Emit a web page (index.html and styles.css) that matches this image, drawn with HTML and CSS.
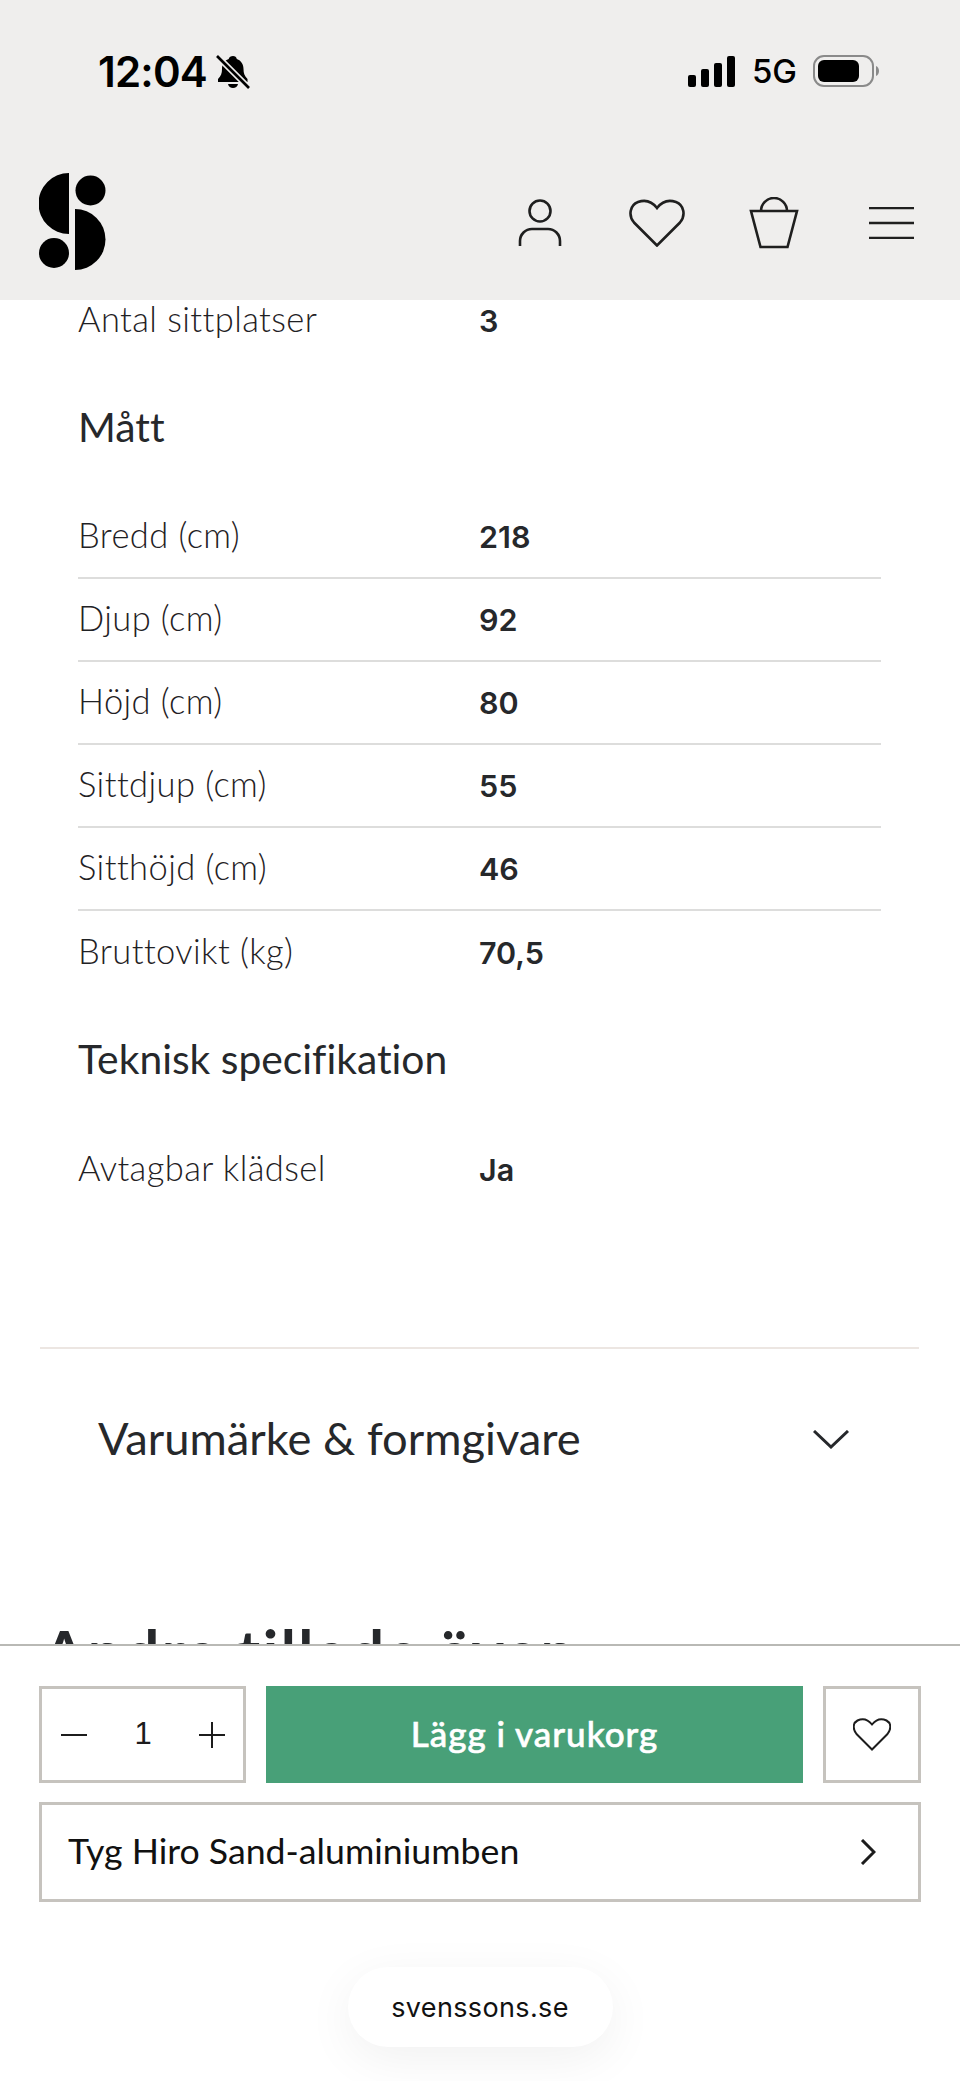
FILE: index.html
```html
<!DOCTYPE html>
<html>
  <head>
    <title>Svenssons</title>
    <link rel="stylesheet" href="styles.css">
  </head>
  <body>
    <div class="page">
      <header class="top">
        <div class="status">
          <div class="status-left">
            <span class="time">12:04</span>
            <svg class="bell" width="34" height="34" viewBox="0 0 34 34">
              <path d="M17 1c2 0 3.500 1.300 3.800 3 4.500 1.500 6.700 5.500 6.700 10 0 4.500 1 7 4 10v3H2v-3c3-3 4-5.500 4-10 0-4.500 2.200-8.500 6.700-10C13 2.300 15 1 17 1z" fill="#000"/>
              <path d="M12 29h10c-.5 2.500-2.500 4-5 4s-4.500-1.500-5-4z" fill="#000"/>
              <path d="M1 1l32 32" stroke="#efeeed" stroke-width="6"/>
              <path d="M1 1l32 32" stroke="#000" stroke-width="2.600"/>
            </svg>
          </div>
          <div class="status-right">
            <svg width="48" height="31" viewBox="0 0 48 31">
              <rect x="0" y="19" width="8" height="12" rx="2"/>
              <rect x="13" y="13" width="8" height="18" rx="2"/>
              <rect x="26" y="7" width="8" height="24" rx="2"/>
              <rect x="39" y="0" width="8" height="31" rx="2"/>
            </svg>
            <span class="network">5G</span>
            <svg width="67" height="32" viewBox="0 0 67 32">
              <rect x="1" y="1" width="59" height="30" rx="10" fill="none" stroke="#8a8a8a" stroke-width="2"/>
              <rect x="5" y="5" width="41" height="22" rx="6" fill="#000"/>
              <path d="M63 11c2 .8 3 2.800 3 5s-1 4.200-3 5z" fill="#8a8a8a"/>
            </svg>
          </div>
        </div>
        <nav class="nav">
          <svg class="logo" width="67" height="97" viewBox="0 0 67 97">
            <path d="M30 0v61A30.500 30.500 0 0 1 30 0z"/>
            <circle cx="51.500" cy="17.500" r="15"/>
            <circle cx="15" cy="80" r="15"/>
            <path d="M36 36a30.500 30.500 0 0 1 0 61z"/>
          </svg>
          <div class="nav-icons">
            <svg class="icon-person" width="44" height="48" viewBox="0 0 44 48">
              <circle cx="22" cy="12" r="10.500"/>
              <path d="M2 47v-5a12 12 0 0 1 12-12h16a12 12 0 0 1 12 12v5"/>
            </svg>
            <svg class="icon-heart" width="56" height="48" viewBox="0 0 56 48">
              <path d="M28 46.500L5 23.500C-1 16.500 1 6 9 3c7-2.500 14-.5 19 6 5-6.500 12-8.500 19-6 8 3 10 13.500 4 20.500z"/>
            </svg>
            <svg class="icon-bag" width="50" height="52" viewBox="0 0 50 52">
              <path d="M2 14h46l-9.500 36h-27z"/>
              <path d="M12 14a13 13 0 0 1 26 0"/>
            </svg>
            <svg class="icon-menu" width="45" height="32" viewBox="0 0 45 32">
              <path d="M0 1h45M0 16h45M0 31h45"/>
            </svg>
          </div>
        </nav>
      </header>

      <main class="main">
        <div class="specs">
          <div class="row first">
            <span class="label">Antal sittplatser</span>
            <span class="value">3</span>
          </div>
          <h3 class="spec-title">Mått</h3>
          <div class="row line">
            <span class="label">Bredd (cm)</span>
            <span class="value">218</span>
          </div>
          <div class="row line">
            <span class="label">Djup (cm)</span>
            <span class="value">92</span>
          </div>
          <div class="row line">
            <span class="label">Höjd (cm)</span>
            <span class="value">80</span>
          </div>
          <div class="row line">
            <span class="label">Sittdjup (cm)</span>
            <span class="value">55</span>
          </div>
          <div class="row line">
            <span class="label">Sitthöjd (cm)</span>
            <span class="value">46</span>
          </div>
          <div class="row">
            <span class="label">Bruttovikt (kg)</span>
            <span class="value">70,5</span>
          </div>
          <h3 class="spec-title">Teknisk specifikation</h3>
          <div class="row">
            <span class="label">Avtagbar klädsel</span>
            <span class="value">Ja</span>
          </div>
        </div>

        <div class="accordion">
          <span class="accordion-title">Varumärke &amp; formgivare</span>
          <svg class="chevron" width="36" height="19" viewBox="0 0 36 19">
            <path d="M1 1l17 16L35 1"/>
          </svg>
        </div>

        <h2 class="more">Andra tillade även</h2>
      </main>

      <footer class="buybar">
        <div class="buy-row">
          <div class="qty box">
            <svg width="26" height="26" viewBox="0 0 26 26"><path d="M0 13h26"/></svg>
            <span class="qty-num">1</span>
            <svg width="26" height="26" viewBox="0 0 26 26"><path d="M0 13h26M13 0v26"/></svg>
          </div>
          <button class="add">Lägg i varukorg</button>
          <div class="fav box">
            <svg width="38" height="33" viewBox="0 0 38 33">
              <path d="M19 31.500L3.500 16C-.500 11-.200 5 4.500 2.500 9.500 0 15 1.500 19 6.500c4-5 9.500-6.500 14.500-4C38.200 5 38.500 11 34.500 16z"/>
            </svg>
          </div>
        </div>
        <div class="variant box">
          <span>Tyg Hiro Sand-aluminiumben</span>
          <svg width="16" height="26" viewBox="0 0 16 26"><path d="M2 1l12 12L2 25"/></svg>
        </div>
        <div class="url-wrap">
          <div class="url">svenssons.se</div>
        </div>
      </footer>
    </div>
  </body>
</html>
```

FILE: styles.css
```css
* {
  box-sizing: border-box;
}

body {
  margin: 0;
  background: #fff;
  color: #26282b;
  font-family: "Lato", sans-serif;
  font-variant-ligatures: none;
}

.page {
  width: 960px;
  height: 2081px;
  display: flex;
  flex-direction: column;
  overflow: hidden;
}

/* Grey top area */
.top {
  height: 300px;
  flex: none;
  background: #efeeed;
  position: relative;
  z-index: 1;
}

.status {
  height: 173px;
  padding: 54px 80px 0 98px;
  display: flex;
  justify-content: space-between;
  align-items: flex-start;
  color: #000;
}

.status-left {
  display: flex;
  align-items: center;
  gap: 9px;
}

.time {
  font-family: "Inter", sans-serif;
  font-size: 42px;
  font-weight: 600;
  line-height: 36px;
  letter-spacing: -0.8px;
}

.bell {
  display: block;
}

.status-right {
  display: flex;
  align-items: center;
  gap: 16px;
  padding-top: 1px;
}

.status-right svg {
  display: block;
}

.network {
  font-family: "Inter", sans-serif;
  font-size: 33px;
  font-weight: 500;
  line-height: 32px;
}

.nav {
  padding: 0 46px 0 39px;
  display: flex;
  justify-content: space-between;
  align-items: flex-start;
}

.logo {
  display: block;
}

.nav-icons {
  display: flex;
  align-items: center;
  padding-top: 24px;
}

.nav-icons svg {
  display: block;
  fill: none;
  stroke: #1f1f1f;
  stroke-width: 2.6;
}

.icon-heart {
  margin-left: 67px;
}

.icon-bag {
  margin-left: 64px;
}

.icon-menu {
  margin-left: 70px;
}

/* Spec tables */
.main {
  flex: 1;
  overflow: hidden;
  min-height: 0;
}

.specs {
  margin-top: -21px;
  padding: 0 79px 0 78px;
}

.row {
  height: 83px;
  display: grid;
  grid-template-columns: 401px 1fr;
  align-items: center;
}

.row.line {
  border-bottom: 2px solid #dddddc;
}

.label {
  font-size: 34.5px;
  font-weight: 300;
  letter-spacing: 0.4px;
  padding-bottom: 5px;
  color: #1f2124;
}

.value {
  font-family: "Inter", sans-serif;
  font-size: 30.5px;
  font-weight: 600;
}

.spec-title {
  margin: 45px 0 49px;
  font-size: 40.8px;
  line-height: 40px;
  font-weight: 400;
}

/* Accordion */
.accordion {
  margin: 136px 41px 0 40px;
  height: 182px;
  padding: 0 70px 0 58px;
  border-top: 2px solid #ece6e2;
  display: flex;
  justify-content: space-between;
  align-items: center;
}

.accordion-title {
  font-size: 45.3px;
  font-weight: 400;
  padding-bottom: 3px;
}

.chevron {
  display: block;
  fill: none;
  stroke: #26282b;
  stroke-width: 3;
}

.more {
  margin: 93px 0 0;
  padding: 0 0 0 43px;
  font-size: 61px;
  font-weight: 700;
  line-height: 60px;
  letter-spacing: 2.5px;
}

/* Bottom bar */
.buybar {
  height: 437px;
  flex: none;
  background: #fff;
  border-top: 2px solid #b9b9b5;
  padding: 40px 39px 0;
  display: flex;
  flex-direction: column;
  gap: 19px;
}

.buy-row {
  display: flex;
  gap: 20px;
  height: 97px;
}

.box {
  border: 3px solid #c6c3be;
  background: #fff;
}

.box svg {
  display: block;
  fill: none;
  stroke: #1c1c1c;
}

.qty {
  width: 207px;
  padding: 0 18px 0 19px;
  display: flex;
  justify-content: space-between;
  align-items: center;
}

.qty svg {
  stroke-width: 2;
}

.qty-num {
  font-family: "Liberation Sans", sans-serif;
  font-size: 31px;
  padding-bottom: 2px;
  color: #1c1c1c;
}

.add {
  flex: 1;
  border: none;
  padding: 0 0 4px;
  background: #48a078;
  color: #fff;
  font-family: "Lato", sans-serif;
  font-size: 35px;
  font-weight: 500;
  letter-spacing: 1px;
  font-variant-ligatures: none;
  -webkit-text-stroke: 0.6px #fff;
}

.fav {
  width: 98px;
  display: flex;
  justify-content: center;
  align-items: center;
}

.fav svg {
  stroke-width: 2;
}

.variant {
  height: 100px;
  padding: 0 42px 0 26px;
  display: flex;
  justify-content: space-between;
  align-items: center;
  font-size: 35.7px;
  color: #111;
}

.variant span {
  padding-bottom: 4px;
}

.variant svg {
  stroke-width: 3;
}

.url-wrap {
  display: flex;
  justify-content: center;
  padding-top: 46px;
}

.url {
  width: 265px;
  height: 80px;
  border-radius: 40px;
  background: #fff;
  box-shadow: 0 12px 50px rgba(0, 0, 0, 0.06);
  display: flex;
  justify-content: center;
  align-items: center;
  font-family: "Inter", sans-serif;
  font-size: 27px;
  color: #111;
  letter-spacing: 0.35px;
}
```
